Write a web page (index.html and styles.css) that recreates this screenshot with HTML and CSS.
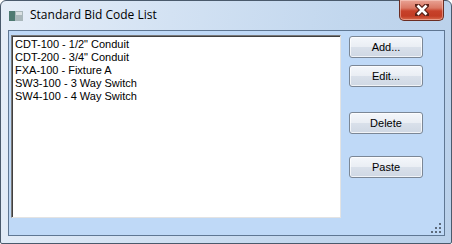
FILE: index.html
```html
<!DOCTYPE html>
<html lang="en">
<head>
    <meta charset="UTF-8">
    <title>Standard Bid Code List</title>
    <link rel="stylesheet" href="styles.css">
</head>
<body>
    <div class="window">
        <div class="titlebar">
            <svg class="app-icon" width="14" height="10" viewBox="0 0 14 10">
                <rect x="0" y="0" width="14" height="10" fill="#c9d3d6"></rect>
                <rect x="0" y="0" width="6" height="10" fill="#4f7a72"></rect>
                <rect x="6" y="0" width="8" height="10" fill="#a9b7bb"></rect>
                <rect x="7" y="1" width="6" height="3" fill="#d9e0e2"></rect>
            </svg>
            <span class="title">Standard Bid Code List</span>
            <div class="close-btn">
                <svg width="14" height="12" viewBox="0 0 14 12">
                    <path d="M2 1 L12 11 M12 1 L2 11" stroke="#5a2118" stroke-width="5" stroke-linecap="square"></path>
                    <path d="M2.5 1.5 L11.5 10.5 M11.5 1.5 L2.5 10.5" stroke="#ffffff" stroke-width="2.6"></path>
                </svg>
            </div>
        </div>

        <div class="client">
            <div class="listbox">
                <div class="item">CDT-100 - 1/2" Conduit</div>
                <div class="item">CDT-200 - 3/4" Conduit</div>
                <div class="item">FXA-100 - Fixture A</div>
                <div class="item">SW3-100 - 3 Way Switch</div>
                <div class="item">SW4-100 - 4 Way Switch</div>
            </div>

            <div class="buttons">
                <button class="btn btn-add">Add...</button>
                <button class="btn btn-edit">Edit...</button>
                <button class="btn btn-delete">Delete</button>
                <button class="btn btn-paste">Paste</button>
            </div>

            <svg class="grip" width="11" height="11" viewBox="0 0 11 11">
                <rect x="8" y="0" width="2" height="2" fill="#5d6b7c"></rect>
                <rect x="4" y="4" width="2" height="2" fill="#5d6b7c"></rect>
                <rect x="8" y="4" width="2" height="2" fill="#5d6b7c"></rect>
                <rect x="0" y="8" width="2" height="2" fill="#5d6b7c"></rect>
                <rect x="4" y="8" width="2" height="2" fill="#5d6b7c"></rect>
                <rect x="8" y="8" width="2" height="2" fill="#5d6b7c"></rect>
            </svg>
        </div>
    </div>
</body>
</html>
```

FILE: styles.css
```css
html, body {
    margin: 0;
    padding: 0;
    background: #ffffff;
}

.window {
    box-sizing: border-box;
    width: 452px;
    height: 244px;
    border: 1px solid #4a5a6c;
    border-radius: 6px 6px 2px 2px;
    padding: 0 6px 7px 7px;
    background: linear-gradient(100deg, #e6eef8 0%, #d3e2f3 35%, #c2d7ee 70%, #b9d0ea 100%);
    display: flex;
    flex-direction: column;
}

.titlebar {
    height: 29px;
    display: flex;
    align-items: center;
    flex-shrink: 0;
}

.app-icon {
    margin-left: 1px;
    margin-top: 1px;
}

.title {
    margin-left: 7px;
    font-family: "Open Sans", "Noto Sans", sans-serif;
    font-size: 12px;
    color: #000000;
    margin-top: -2px;
}

.close-btn {
    margin-left: auto;
    margin-right: 1px;
    align-self: flex-start;
    margin-top: -1px;
    box-sizing: border-box;
    width: 45px;
    height: 21px;
    border: 1px solid #6b2d22;
    border-top: none;
    border-radius: 0 0 5px 5px;
    background: linear-gradient(180deg, #e9a395 0%, #da7864 40%, #c7412a 55%, #c23c24 80%, #d86a4c 100%);
    box-shadow: inset 0 0 0 1px rgba(255, 220, 210, 0.45);
    display: flex;
    align-items: center;
    justify-content: center;
}

.client {
    position: relative;
    flex: 1;
    display: flex;
    align-items: flex-start;
    border: 1px solid #5f7793;
    background: #bfd9f7;
    padding: 4px 0 0 2px;
}

.listbox {
    box-sizing: border-box;
    width: 330px;
    height: 183px;
    background: #ffffff;
    border-top: 1px solid #7a7a7a;
    border-left: 1px solid #7a7a7a;
    border-right: 1px solid #e3e3e3;
    border-bottom: 1px solid #e3e3e3;
    box-shadow: inset 1px 1px 0 #404040;
    padding: 2px 0 0 3px;
    font-family: "Liberation Sans", Arial, sans-serif;
    font-size: 11px;
    line-height: 13px;
    color: #000000;
}

.buttons {
    display: flex;
    flex-direction: column;
    margin-left: 8px;
    margin-top: 1px;
}

.btn {
    box-sizing: border-box;
    width: 74px;
    height: 22px;
    padding: 0;
    border: 1px solid #7b8796;
    border-radius: 3px;
    background: linear-gradient(180deg, #f4f7fb 0%, #eaeef4 48%, #d9e0ea 52%, #cfd8e4 100%);
    box-shadow: inset 0 0 0 1px rgba(255, 255, 255, 0.7);
    font-family: "Liberation Sans", Arial, sans-serif;
    font-size: 11px;
    color: #000000;
}

.btn-edit {
    margin-top: 7px;
}

.btn-delete {
    margin-top: 25px;
}

.btn-paste {
    margin-top: 22px;
}

.grip {
    position: absolute;
    right: 2px;
    bottom: 1px;
}
```
